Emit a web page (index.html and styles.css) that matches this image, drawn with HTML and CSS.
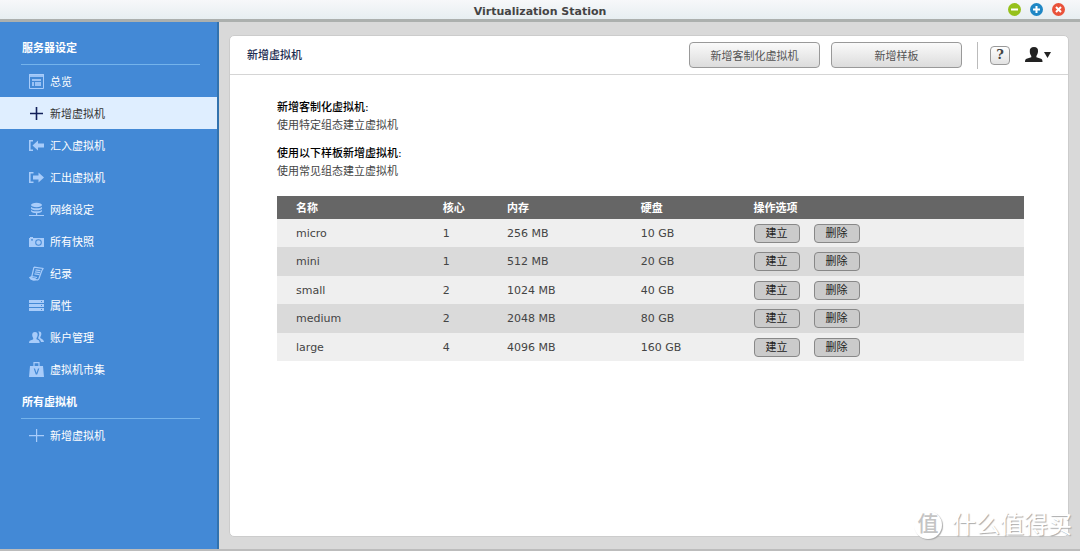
FILE: index.html
```html
<!DOCTYPE html>
<html lang="zh-CN">
<head>
<meta charset="utf-8">
<meta name="viewport" content="width=device-width, initial-scale=1">
<title>Virtualization Station</title>
<link rel="stylesheet" href="styles.css">
</head>
<body>
<div class="window">
  <header class="titlebar">
    <h1 class="window-title">Virtualization Station</h1>
    <div class="window-controls">
      <button class="control control-min" type="button" aria-label="最小化"><svg viewBox="0 0 13 13"><path d="M3 6.5h7"/></svg></button>
      <button class="control control-max" type="button" aria-label="最大化"><svg viewBox="0 0 13 13"><path d="M3 6.5h7M6.500 3v7"/></svg></button>
      <button class="control control-close" type="button" aria-label="关闭"><svg viewBox="0 0 13 13"><path d="M4 4l5 5M9 4l-5 5"/></svg></button>
    </div>
  </header>
  <div class="workspace">
    <nav class="sidebar">
      <h2 class="nav-heading">服务器设定</h2>
      <ul class="nav-list">
        <li><a class="nav-item" href="#overview"><svg class="icon" viewBox="0 0 15 15"><path fill="none" stroke="currentColor" d="M.5.5h14v14H.5z"/><path d="M0 0h15v3H0zM3 5h9v2H3zM3 8h2v4H3zM6 8h6v4H6z" opacity=".85"/></svg>总览</a></li>
        <li><a class="nav-item is-active" href="#new" aria-current="page"><svg class="icon" viewBox="0 0 15 15"><path d="M6.700 1h1.600v5.700H14v1.600H8.300V14H6.700V8.300H1V6.700h5.700z"/></svg>新增虚拟机</a></li>
        <li><a class="nav-item" href="#import"><svg class="icon" viewBox="0 0 15 15"><path d="M0 2h4v1.500H1.600v8H4V13H0zM3.500 7.500L9 2.500V5.500h6v4H9v3z"/></svg>汇入虚拟机</a></li>
        <li><a class="nav-item" href="#export"><svg class="icon" viewBox="0 0 15 15"><path d="M0 2h4.500v1.500H1.600v8h2.900V13H0zM15 7.500l-5.500-5v3H4v4h5.500v3z"/></svg>汇出虚拟机</a></li>
        <li><a class="nav-item" href="#network"><svg class="icon" viewBox="0 0 15 15"><ellipse cx="7.500" cy="3" rx="5.500" ry="2.200"/><path d="M2 4.700c1 2 10 2 11 0v1.800c-1 2.400-10 2.400-11 0zM2 7.700c1 2 10 2 11 0v1.500c-1 2.600-10 2.600-11 0zM7 11h1.200v2H15v1H0v-1h7z"/></svg>网络设定</a></li>
        <li><a class="nav-item" href="#snapshots"><svg class="icon" viewBox="0 0 15 15"><path fill-rule="evenodd" d="M0 4h1V3h3v1h11v9H0zM2 5.200v1.300h2V5.200zM9.500 5.200a3.300 3.300 0 1 0 0 6.600 3.300 3.300 0 0 0 0-6.600zm0 1a2.300 2.300 0 1 1 0 4.600 2.300 2.300 0 0 1 0-4.600z"/></svg>所有快照</a></li>
        <li><a class="nav-item" href="#logs"><svg class="icon" viewBox="0 0 15 15"><path fill="none" stroke="currentColor" stroke-width="1.200" d="M5 1.200l9 1.300c-.5 1.500-1 1.500-1.500 3L10 12.500c-.5 1.500-2 1.800-3 1L.8 11.500l2-1L5 1.200M.8 11.500c1 2.500 4 2.800 6.200 2M2.800 10.500l5.200 1M6.500 3.800l5 .8M6 5.800l5 .8M5.400 7.800l5 .8"/><path d="M1 11l6 1.500v1.800C4 15 1 13.500 1 11z"/></svg>纪录</a></li>
        <li><a class="nav-item" href="#properties"><svg class="icon" viewBox="0 0 15 15"><path fill-rule="evenodd" d="M0 2h15v3H0zm12 1v1h1V3zM0 6h15v3H0zm12 1v1h1V7zM0 10h15v3H0zm12 1v1h1v-1z"/></svg>属性</a></li>
        <li><a class="nav-item" href="#accounts"><svg class="icon" viewBox="0 0 15 15"><path d="M6 2c2 0 3 1.300 2.600 3.500-.2 1.200-.6 2-1.100 2.500v1.200c1.800.9 3 .8 3.200 3.800H0c.2-3 2-2.500 4.200-3.800V8C3.600 7.300 3.300 6.500 3.200 5.300 3 3.200 4.200 2 6 2z"/><path d="M9.300 1.500c2.100-.4 3.400.9 3 3-.2 1.300-.6 1.800-1 2.500v1c1.600 1 3.400 1.400 3.700 4h-3c-.4-1.900-1.500-2.500-2.700-3.300V7.300c1.100-2 1.300-3.800 0-5.800z"/></svg>账户管理</a></li>
        <li><a class="nav-item" href="#market"><svg class="icon" viewBox="0 0 15 15"><path fill="none" stroke="currentColor" stroke-width="1.200" d="M5 4V.6h5V4"/><path fill-rule="evenodd" d="M1 4h13l1 11H0zM4.700 6.500l2.100 6h1.400l2.100-6H9l-1.500 4.600L6 6.500z"/></svg>虚拟机市集</a></li>
      </ul>
      <h2 class="nav-heading">所有虚拟机</h2>
      <ul class="nav-list">
        <li><a class="nav-item" href="#new"><svg class="icon" viewBox="0 0 15 15"><path d="M7 1h1.200v6H15v1.200H8.200V14H7V8.200H0V7h7z"/></svg>新增虚拟机</a></li>
      </ul>
    </nav>
    <main class="panel">
      <header class="panel-header">
        <h2 class="panel-title">新增虚拟机</h2>
        <button class="action" type="button">新增客制化虚拟机</button>
        <button class="action" type="button">新增样板</button>
        <div class="tools">
          <button class="help" type="button" aria-label="说明">?</button>
          <button class="user" type="button" aria-label="用户">
            <svg viewBox="0 0 26 16"><path d="M9 0c3 0 4.300 1.700 4 4.500-.2 2-.8 3.300-1.600 4.500v1.300l4.600 1.500c1.300.5 1.500 1.700 1.500 3.200H0c0-1.500.3-2.700 1.500-3.200L6.300 10.300V9C5.400 7.800 4.900 6.500 4.800 4.500 4.600 1.700 6 0 9 0z"/><path d="M19 5h7l-3.500 6z"/></svg>
          </button>
        </div>
      </header>
      <div class="content">
        <section class="intro">
          <h3>新增客制化虚拟机:</h3>
          <p>使用特定组态建立虚拟机</p>
        </section>
        <section class="intro">
          <h3>使用以下样板新增虚拟机:</h3>
          <p>使用常见组态建立虚拟机</p>
        </section>
        <table class="templates">
          <thead>
            <tr><th class="col-name">名称</th><th class="col-core">核心</th><th class="col-memory">内存</th><th class="col-disk">硬盘</th><th>操作选项</th></tr>
          </thead>
          <tbody>
            <tr><td>micro</td><td>1</td><td>256 MB</td><td>10 GB</td><td><div class="row-actions"><button type="button">建立</button><button type="button">删除</button></div></td></tr>
            <tr><td>mini</td><td>1</td><td>512 MB</td><td>20 GB</td><td><div class="row-actions"><button type="button">建立</button><button type="button">删除</button></div></td></tr>
            <tr><td>small</td><td>2</td><td>1024 MB</td><td>40 GB</td><td><div class="row-actions"><button type="button">建立</button><button type="button">删除</button></div></td></tr>
            <tr><td>medium</td><td>2</td><td>2048 MB</td><td>80 GB</td><td><div class="row-actions"><button type="button">建立</button><button type="button">删除</button></div></td></tr>
            <tr><td>large</td><td>4</td><td>4096 MB</td><td>160 GB</td><td><div class="row-actions"><button type="button">建立</button><button type="button">删除</button></div></td></tr>
          </tbody>
        </table>
      </div>
    </main>
  </div>
  <div class="watermark"><span class="watermark-badge">值</span><span>什么值得买</span></div>
</div>
</body>
</html>
```
FILE: styles.css
```css
* {
  box-sizing: border-box;
}

body,
h1,
h2,
h3,
p,
ul {
  margin: 0;
  padding: 0;
}

body {
  font-family: "DejaVu Sans", "Noto Sans CJK SC", sans-serif;
  font-size: 11px;
  color: #444;
}

button {
  padding: 0;
  font: inherit;
  color: inherit;
  cursor: pointer;
}

svg {
  display: block;
  fill: currentColor;
}

.window {
  position: relative;
  display: flex;
  flex-direction: column;
  min-height: 100vh;
  background: #d9d9d9;
  border-bottom: 2px solid #bcbcbc;
}

/* Title bar */

.titlebar {
  display: grid;
  grid-template-columns: 1fr auto 1fr;
  align-items: center;
  height: 22px;
  padding: 0 15px;
  background: linear-gradient(#f7f8fa, #e7eef1);
  border-bottom: 3px solid #acb0ae;
}

.window-title {
  grid-column: 2;
  padding-top: 4px;
  font-size: 11px;
  line-height: 15px;
  color: #444;
}

.window-controls {
  display: flex;
  justify-content: flex-end;
  gap: 9px;
}

.control {
  width: 13px;
  height: 13px;
  border: 0;
  border-radius: 50%;
}

.control svg {
  fill: none;
  stroke: #fff;
  stroke-width: 2;
}

.control-min {
  background: #96c11c;
}

.control-max {
  background: #1e87c5;
}

.control-close {
  background: #e9523a;
}

.workspace {
  display: flex;
  flex: 1;
}

/* Sidebar */

.sidebar {
  flex: none;
  width: 219px;
  padding-top: 9px;
  background: #4389d6;
  border-right: 2px solid #3272ae;
}

.nav-heading {
  margin: 0 17px 0 21px;
  padding: 2px 1px 0;
  font-size: 11px;
  line-height: 31px;
  color: #fff;
  border-bottom: 1px solid #74b3eb;
}

.nav-list {
  list-style: none;
}

.nav-item {
  display: flex;
  align-items: center;
  gap: 6px;
  height: 32px;
  padding-left: 29px;
  color: #fff;
  text-decoration: none;
}

.nav-item.is-active {
  color: #333;
  background: #dfeeff;
}

.icon {
  width: 15px;
  height: 15px;
  color: #a8ccfa;
}

.is-active .icon {
  color: #12205a;
}

/* Main panel */

.panel {
  flex: 1;
  min-width: 0;
  margin: 13px 11px 12px 10px;
  background: #fff;
  border: 1px solid #ccc;
  border-radius: 5px;
}

.panel-header {
  display: flex;
  align-items: center;
  gap: 11px;
  height: 39px;
  padding: 0 17px;
  border-bottom: 1px solid #d5d5d5;
}

.panel-title {
  flex: 1;
  padding-bottom: 2px;
  font-size: 11px;
  font-weight: 500;
  color: #1c2c50;
}

.action {
  width: 131px;
  height: 26px;
  color: #555;
  background: linear-gradient(#fafafa, #dcdcdc);
  border: 1px solid #999;
  border-radius: 4px;
}

.tools {
  display: flex;
  align-items: center;
  gap: 15px;
  height: 27px;
  margin-left: 4px;
  padding-left: 12px;
  border-left: 1px solid #bbb;
}

.help {
  width: 20px;
  height: 19px;
  font-family: "DejaVu Serif", serif;
  font-size: 13px;
  font-weight: bold;
  line-height: 16px;
  color: #444;
  background: linear-gradient(#fff, #e2e2e2);
  border: 1px solid #999;
  border-radius: 4px;
}

.user {
  width: 26px;
  color: #222;
  background: none;
  border: 0;
}

.content {
  padding: 24px 44px 22px 47px;
}

.intro {
  margin-bottom: 10px;
  line-height: 18px;
}

.intro h3 {
  font-size: 11px;
  font-weight: 500;
  color: #000;
}

/* Template table */

.templates {
  width: 100%;
  margin-top: 15px;
  table-layout: fixed;
  border-collapse: collapse;
  text-align: left;
}

.templates th {
  height: 23px;
  padding: 2px 0 0;
  line-height: 16px;
  color: #fff;
  background: #666;
}

.templates td {
  height: 28px;
  padding: 0;
}

.templates tr > :first-child {
  padding-left: 19px;
}

.templates tbody tr {
  background: #efefef;
}

.templates tbody tr:nth-child(even) {
  background: #dadada;
}

.templates tbody tr:nth-child(even) td {
  height: 29px;
}

.col-name {
  width: 22.2%;
}

.col-core {
  width: 8.6%;
}

.col-memory {
  width: 17.9%;
}

.col-disk {
  width: 15.1%;
}

.row-actions {
  display: flex;
  gap: 14px;
}

.row-actions button {
  width: 46px;
  height: 19px;
  padding-top: 1px;
  line-height: 16px;
  color: #222;
  background: #cbcbcb;
  border: 1px solid #888;
  border-radius: 4px;
}

/* Watermark over the lower right corner */

.watermark {
  position: absolute;
  right: 8px;
  bottom: 9px;
  display: flex;
  align-items: center;
  gap: 10px;
  font-size: 24px;
  line-height: 30px;
  color: #fff;
  text-shadow: 1px 1px 1px #aaa;
  pointer-events: none;
}

.watermark-badge {
  width: 28px;
  height: 28px;
  font-size: 21px;
  font-weight: 500;
  line-height: 26px;
  text-align: center;
  color: #c4c4c4;
  text-shadow: none;
  background: #fff;
  border-radius: 50%;
  box-shadow: 1px 1px 1px #aaa;
}
```
